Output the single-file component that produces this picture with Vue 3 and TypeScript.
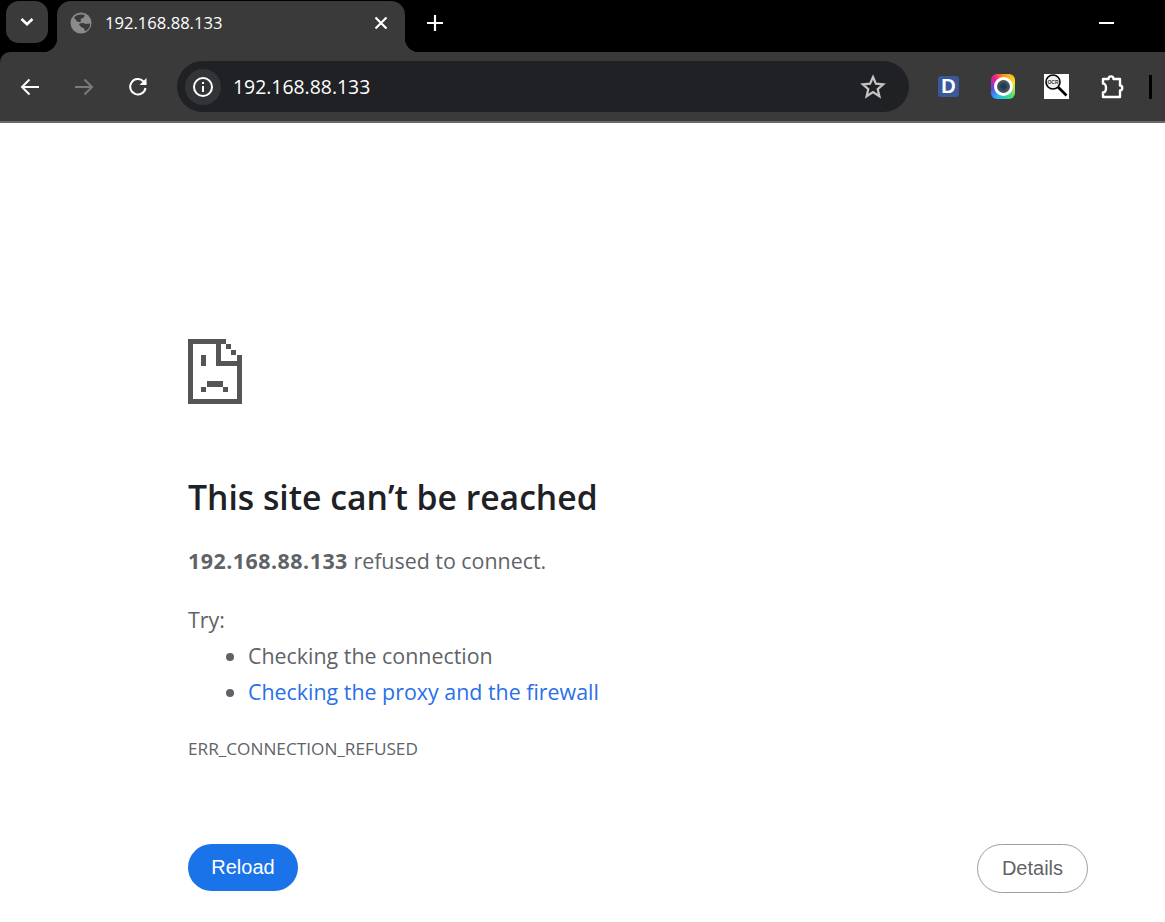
<template>
  <div class="window">
    <header class="chrome">
      <div class="tabstrip">
        <button class="tab-search">
          <svg width="14" height="10" viewBox="0 0 14 10" fill="none" stroke="#fff" stroke-width="2.6">
            <path d="M1.5 2l5.5 5.2L12.5 2" />
          </svg>
        </button>
        <div class="tab">
          <svg class="globe" width="22" height="22" viewBox="0 0 22 22">
            <circle cx="11" cy="11" r="10.5" fill="#8b8b8b" />
            <path d="M4 5.500C6 3 10 2 14.500 3c.5 1.500-1 3-3 3.500-1 .5-1 2-.5 3-2 1.500-4.500 0-5-1.500-.5-1-1.500-1.500-2-2.500z" fill="#3a3a3a" />
            <path d="M9 12c2-1.500 5-1.500 6.500 0 1.500 0 3-.5 4.500-.5.5 3-1.500 6-4 7.500-1.500 0-2-1.500-2-3-2 0-4.500-2-5-4z" fill="#3a3a3a" />
          </svg>
          <span class="tab-title">192.168.88.133</span>
          <svg class="tab-close" width="14" height="14" viewBox="0 0 14 14" stroke="#fff" stroke-width="2.200">
            <path d="M1.500 1.500l11 11M12.500 1.500l-11 11" />
          </svg>
        </div>
        <svg class="new-tab" width="16" height="16" viewBox="0 0 16 16" stroke="#fff" stroke-width="2.200">
          <path d="M8 0v16M0 8h16" />
        </svg>
        <div class="minimize"></div>
      </div>
      <div class="toolbar">
        <svg class="nav back" width="20" height="18" viewBox="0 0 20 18" fill="none" stroke="#fff" stroke-width="2">
          <path d="M19 9H2M9.500 1.500L2 9l7.500 7.500" />
        </svg>
        <svg class="nav forward" width="20" height="18" viewBox="0 0 20 18" fill="none" stroke="#7b7b7b" stroke-width="2">
          <path d="M1 9h17M10.500 1.500L18 9l-7.500 7.500" />
        </svg>
        <svg class="nav reload" width="20" height="20" viewBox="0 0 20 20" fill="none" stroke="#fff" stroke-width="2">
          <path d="M17.500 11a7.700 7.700 0 1 1-2-6.500L18 7" />
          <path d="M18.500 1v7h-7" stroke="none" fill="#fff" />
        </svg>
        <div class="omnibox">
          <div class="info-chip">
            <svg width="22" height="22" viewBox="0 0 22 22" fill="none" stroke="#fff" stroke-width="2">
              <circle cx="11" cy="11" r="9" />
              <path d="M11 10v6M11 6v2" />
            </svg>
          </div>
          <span class="url">192.168.88.133</span>
          <svg class="star" width="26" height="25" viewBox="0 0 26 25" fill="none" stroke="#c4c4c4" stroke-width="2.200" stroke-linejoin="miter">
            <path d="M13 3l2.900 6.700 7.300.6-5.500 4.800 1.700 7.100L13 18l-6.400 4.200 1.700-7.100-5.500-4.800 7.300-.6z" />
          </svg>
        </div>
        <div class="ext ext-d">D</div>
        <div class="ext ext-cam"><span class="lens"></span></div>
        <div class="ext ext-ocr">
          <svg width="25" height="25" viewBox="0 0 25 25" fill="none" stroke="#000">
            <circle cx="9" cy="8" r="7" stroke-width="1.600" fill="#eee" />
            <path d="M14 13l8.500 8.500" stroke-width="2.600" />
            <text x="9" y="9.800" font-size="5" font-weight="700" text-anchor="middle" stroke="none" fill="#333" font-family="Liberation Sans, sans-serif">OCR</text>
          </svg>
        </div>
        <svg class="puzzle" width="28" height="28" viewBox="0 0 28 28" fill="none" stroke="#fff" stroke-width="2.400" stroke-linejoin="round">
          <path d="M5 6h5.500c0-3.500 5-3.500 5 0H22v6.500c3 0 3 5 0 5V24H5v-4.500c4 0 4-9 0-9V6z" />
        </svg>
        <div class="profile-bar"></div>
      </div>
    </header>

    <main class="content">
      <svg class="sad-page" width="54" height="65" viewBox="0 0 54 65" fill="#555" shape-rendering="crispEdges">
        <rect x="0" y="0" width="5" height="65" />
        <rect x="0" y="0" width="38" height="5" />
        <rect x="28" y="0" width="5" height="27" />
        <rect x="28" y="22" width="26" height="5" />
        <rect x="38" y="5" width="5" height="5" />
        <rect x="43" y="11" width="5" height="5" />
        <rect x="49" y="16" width="5" height="6" />
        <rect x="49" y="22" width="5" height="43" />
        <rect x="0" y="60" width="54" height="5" />
        <rect x="13" y="16" width="5" height="11" />
        <rect x="19" y="42" width="16" height="6" />
        <rect x="13" y="48" width="5" height="5" />
        <rect x="35" y="48" width="5" height="5" />
      </svg>

      <h1>This site can’t be reached</h1>
      <p class="summary"><strong>192.168.88.133</strong> refused to connect.</p>
      <p class="try">Try:</p>
      <ul>
        <li v-for="tip in tips" :key="tip.text" :class="{ link: tip.link }">
          <span>{{ tip.text }}</span>
        </li>
      </ul>
      <div class="code">ERR_CONNECTION_REFUSED</div>

      <div class="buttons">
        <button class="btn-reload">Reload</button>
        <button class="btn-details">Details</button>
      </div>
    </main>
  </div>
</template>

<script setup lang="ts">
interface Tip {
  text: string;
  link: boolean;
}

const tips: Tip[] = [
  { text: 'Checking the connection', link: false },
  { text: 'Checking the proxy and the firewall', link: true },
];
</script>

<style scoped>
.window {
  height: 922px;
  overflow: hidden;
  background: #fff;
  font-family: "Open Sans", "Noto Sans", sans-serif;
}

.chrome {
  background: #000;
}

.tabstrip {
  display: flex;
  align-items: flex-start;
  height: 52px;
  padding: 1px 0 0 6px;
  box-sizing: border-box;
}

.tab-search {
  width: 42px;
  height: 42px;
  padding: 0;
  border: none;
  border-radius: 13px;
  background: #3a3a3a;
  display: flex;
  align-items: center;
  justify-content: center;
}

.tab {
  position: relative;
  display: flex;
  align-items: center;
  width: 348px;
  height: 51px;
  margin-left: 9px;
  padding: 0 17px 8px 13px;
  box-sizing: border-box;
  background: #3a3a3a;
  border-radius: 14px 14px 0 0;
}

.tab::before,
.tab::after {
  content: "";
  position: absolute;
  bottom: 0;
  width: 14px;
  height: 14px;
}

.tab::before {
  left: -14px;
  background: radial-gradient(circle at 0 0, transparent 14px, #3a3a3a 14.5px);
}

.tab::after {
  right: -14px;
  background: radial-gradient(circle at 100% 0, transparent 14px, #3a3a3a 14.5px);
}

.tab-title {
  margin-left: 13px;
  flex: 1;
  color: #fff;
  font-size: 16.600px;
}

.new-tab {
  margin: 14px 0 0 22px;
}

.minimize {
  width: 15px;
  height: 2px;
  margin: 21px 0 0 656px;
  background: #fff;
}

.toolbar {
  display: flex;
  align-items: center;
  height: 69px;
  background: #3a3a3a;
  border-radius: 10px 0 0 0;
  border-bottom: 2px solid #6a6a6a;
  box-sizing: content-box;
}

.nav {
  flex-shrink: 0;
}

.back {
  margin-left: 20px;
}

.forward {
  margin-left: 34px;
}

.reload {
  margin-left: 34px;
}

.omnibox {
  display: flex;
  align-items: center;
  width: 732px;
  height: 51px;
  margin-left: 29px;
  padding: 0 23px 0 8px;
  box-sizing: border-box;
  background: #202124;
  border-radius: 26px;
  flex-shrink: 0;
}

.info-chip {
  width: 36px;
  height: 36px;
  border-radius: 50%;
  background: #333438;
  display: flex;
  align-items: center;
  justify-content: center;
}

.url {
  flex: 1;
  margin-left: 12px;
  color: #fff;
  font-size: 19.400px;
}

.ext {
  flex-shrink: 0;
}

.ext-d {
  width: 21px;
  height: 21px;
  margin-left: 29px;
  border-radius: 3px;
  background: #3b5998;
  color: #fff;
  font: 700 20px/21px "Liberation Sans", sans-serif;
  text-align: center;
}

.ext-cam {
  width: 24px;
  height: 25px;
  margin-left: 32px;
  border-radius: 6px;
  background: conic-gradient(#f7941d, #f9e423 20%, #3ddc84 40%, #29b6f6 58%, #5c4be0 72%, #ec1c8e 88%, #f7941d);
  display: flex;
  align-items: center;
  justify-content: center;
}

.lens {
  width: 13px;
  height: 13px;
  border: 3px solid #fff;
  border-radius: 50%;
  background: radial-gradient(circle, #1c3a52 20%, #46525c 55%);
}

.ext-ocr {
  width: 25px;
  height: 25px;
  margin-left: 29px;
  background: #fff;
}

.puzzle {
  margin-left: 29px;
  flex-shrink: 0;
}

.profile-bar {
  width: 3px;
  height: 24px;
  margin-left: 23px;
  background: #000;
  flex-shrink: 0;
}

.content {
  width: 900px;
  margin-left: 188px;
  padding-top: 216px;
  color: #5f6368;
  font-size: 21.400px;
}

.sad-page {
  display: block;
}

h1 {
  margin: 71px 0 0;
  color: #202124;
  font-size: 33.700px;
  font-weight: 600;
  line-height: 44px;
}

.summary {
  margin: 24px 0 0;
  line-height: 36px;
}

.summary strong {
  font-weight: 700;
  letter-spacing: 0.5px;
}

.try {
  margin: 23px 0 0;
  line-height: 36px;
}

ul {
  margin: 0;
  padding-left: 60px;
}

li {
  line-height: 36px;
}

li.link span {
  color: #2a6fe8;
}

.code {
  margin-top: 28px;
  font-size: 17.200px;
  line-height: 22px;
}

.buttons {
  display: flex;
  align-items: flex-start;
  justify-content: space-between;
  margin-top: 84px;
}

.btn-reload,
.btn-details {
  font-family: "Liberation Sans", sans-serif;
  font-size: 20px;
  border-radius: 25px;
  padding: 0;
}

.btn-reload {
  width: 110px;
  height: 47px;
  border: none;
  background: #1a73e8;
  color: #fff;
}

.btn-details {
  width: 111px;
  height: 49px;
  border: 1px solid #9aa0a6;
  background: #fff;
  color: #5f6368;
}
</style>

<style>
html,
body {
  margin: 0;
  background: #fff;
}
</style>
